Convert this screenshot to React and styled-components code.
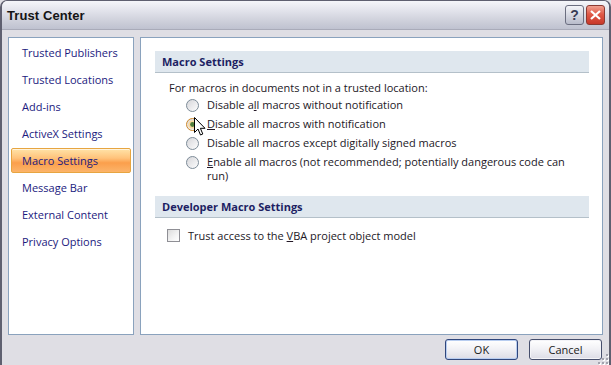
import React from "react";
import styled, { createGlobalStyle } from "styled-components";

const GlobalStyle = createGlobalStyle`
  html, body {
    margin: 0;
    padding: 0;
    background: #dfdee4;
  }
  body {
    font-family: "Open Sans", "Noto Sans", sans-serif;
    font-size: 11px;
  }
`;

const Window = styled.div`
  width: 611px;
  height: 365px;
  box-sizing: border-box;
  display: flex;
  flex-direction: column;
  background: #dfdee4;
  border-left: 2px solid #5f6070;
  border-right: 2px solid #5f6070;
  border-top: 1px solid #5f6070;
  border-radius: 7px 7px 0 0;
  overflow: hidden;
  position: relative;
`;

const TitleBar = styled.div`
  height: 28px;
  flex-shrink: 0;
  display: flex;
  align-items: center;
  padding: 0 4px 0 5px;
  background: linear-gradient(#f5f6fa 0%, #e2e3eb 35%, #ccced9 75%, #bfc2d0 100%);
  border-bottom: 1px solid #a9abb9;
`;

const Title = styled.div`
  flex: 1;
  font-family: "Liberation Sans", Arial, sans-serif;
  font-weight: bold;
  font-size: 13px;
  color: #141414;
  letter-spacing: 0.1px;
`;

const CaptionButton = styled.div`
  width: 19px;
  height: 20px;
  box-sizing: border-box;
  margin-left: 2px;
  border: 1px solid ${(p) => (p.$close ? "#8b3a32" : "#6b6e80")};
  border-radius: 3px;
  display: flex;
  align-items: center;
  justify-content: center;
  background: ${(p) =>
    p.$close
      ? "linear-gradient(#f0a090 0%, #e05a48 45%, #c8382a 100%)"
      : "linear-gradient(#f4f5f9 0%, #d6d8e2 50%, #b9bccb 100%)"};
  color: ${(p) => (p.$close ? "#fff" : "#3a3d55")};
  font-family: "Liberation Sans", Arial, sans-serif;
  font-weight: bold;
  font-size: 14px;
`;

const Body = styled.div`
  flex: 1;
  display: flex;
  flex-direction: column;
  padding: 7px 6px 0 6px;
  min-height: 0;
`;

const Panels = styled.div`
  display: flex;
  gap: 6px;
  height: 298px;
`;

const Nav = styled.div`
  width: 126px;
  box-sizing: border-box;
  background: #fff;
  border: 1px solid #8aa2bd;
  padding-top: 1px;
  display: flex;
  flex-direction: column;
`;

const NavItem = styled.div`
  height: 25px;
  margin: 1px 2px;
  box-sizing: border-box;
  display: flex;
  align-items: center;
  padding-left: 10px;
  padding-bottom: 1px;
  color: #1b1a7e;
  white-space: nowrap;
  border: 1px solid ${(p) => (p.$active ? "#e7a540" : "transparent")};
  border-radius: 2px;
  background: ${(p) =>
    p.$active
      ? "linear-gradient(#ffe3a8 0%, #ffc27a 40%, #fb9f4c 60%, #fcb46a 100%)"
      : "transparent"};
  box-shadow: ${(p) =>
    p.$active ? "inset 0 1px 0 rgba(255,255,255,0.6)" : "none"};
`;

const Content = styled.div`
  flex: 1;
  box-sizing: border-box;
  background: #fff;
  border: 1px solid #8aa2bd;
  padding: 13px 13px 0 14px;
  position: relative;
`;

const SectionHeader = styled.div`
  height: 21px;
  box-sizing: content-box;
  background: #dfe7ee;
  border-bottom: 1px solid #b4c0c9;
  display: flex;
  align-items: center;
  padding-left: 7px;
  font-weight: bold;
  color: #1d1f63;
`;

const Section = styled.div`
  padding: ${(p) => (p.$compact ? "5px" : "6px")} 20px 0 14px;
  margin-bottom: 10px;
  color: #231826;
`;

const Lead = styled.div`
  height: 17px;
  display: flex;
  align-items: center;
`;

const OptionRow = styled.div`
  display: flex;
  align-items: flex-start;
  padding-left: 17px;
  min-height: 19px;
  line-height: 14px;
`;

const OptionMark = styled.div`
  width: 13px;
  height: 13px;
  flex-shrink: 0;
  margin-top: 3px;
  margin-right: 8px;
`;

const OptionText = styled.div`
  padding: 2px 0 3px;
  &::first-letter {
    text-decoration: ${(p) => (p.$keyFirst ? "underline" : "none")};
  }
`;

const CheckRow = styled.div`
  display: flex;
  align-items: center;
  height: 19px;
  padding-top: 3px;
  margin-left: -2px;
`;

const CheckBox = styled.div`
  width: 13px;
  height: 13px;
  box-sizing: border-box;
  border: 1px solid #8f8f95;
  background: linear-gradient(135deg, #dcdcdc 0%, #f4f4f4 60%, #ffffff 100%);
  margin-right: 8px;
`;

const Footer = styled.div`
  flex: 1;
  display: flex;
  justify-content: flex-end;
  align-items: flex-start;
  gap: 11px;
  padding-top: 4px;
  padding-right: 1px;
`;

const Button = styled.div`
  width: 73px;
  height: 21px;
  box-sizing: border-box;
  border: 1px solid ${(p) => (p.$default ? "#30467c" : "#464e6c")};
  border-radius: 3px;
  background: linear-gradient(#ffffff 0%, #f2f2f6 45%, #dcdce6 100%);
  box-shadow: ${(p) =>
    p.$default ? "inset 0 0 0 1px #b8cdf0" : "inset 0 0 0 1px #f4f4f8"};
  display: flex;
  align-items: center;
  justify-content: center;
  color: #1a1a1a;
`;

const U = styled.span`
  text-decoration: underline;
`;

const Cursor = styled.svg`
  position: absolute;
  left: 53px;
  top: 79px;
`;

const Grip = styled.svg`
  position: absolute;
  right: 0;
  bottom: 0;
`;

const Radio = ({ checked }) => (
  <svg width="13" height="13" viewBox="0 0 13 13">
    <defs>
      <linearGradient id={checked ? "rg1" : "rg0"} x1="0" y1="0" x2="1" y2="1">
        <stop offset="0" stopColor="#d4d4d8" />
        <stop offset="1" stopColor="#ffffff" />
      </linearGradient>
    </defs>
    <circle
      cx="6.5"
      cy="6.5"
      r="6"
      fill={`url(#${checked ? "rg1" : "rg0"})`}
      stroke={checked ? "#d08a2a" : "#7d8c98"}
      strokeWidth="1"
    />
    {checked && (
      <>
        <circle cx="6.5" cy="6.5" r="4.3" fill="#fbd9a0" />
        <circle cx="6.5" cy="6.5" r="2.4" fill="#4f7d3a" />
      </>
    )}
  </svg>
);

const navItems = [
  "Trusted Publishers",
  "Trusted Locations",
  "Add-ins",
  "ActiveX Settings",
  "Macro Settings",
  "Message Bar",
  "External Content",
  "Privacy Options",
];

export default function App() {
  return (
    <>
      <GlobalStyle />
      <Window>
        <TitleBar>
          <Title>Trust Center</Title>
          <CaptionButton>?</CaptionButton>
          <CaptionButton $close>
            <svg width="11" height="10" viewBox="0 0 11 10">
              <path d="M1 1 L10 9 M10 1 L1 9" stroke="#fff" strokeWidth="2.2" />
            </svg>
          </CaptionButton>
        </TitleBar>
        <Body>
          <Panels>
            <Nav>
              {navItems.map((n) => (
                <NavItem key={n} $active={n === "Macro Settings"}>
                  {n}
                </NavItem>
              ))}
            </Nav>
            <Content>
              <SectionHeader>Macro Settings</SectionHeader>
              <Section>
                <Lead>For macros in documents not in a trusted location:</Lead>
                <OptionRow>
                  <OptionMark>
                    <Radio />
                  </OptionMark>
                  <OptionText>
                    Disable a<U>l</U>l macros without notification
                  </OptionText>
                </OptionRow>
                <OptionRow>
                  <OptionMark>
                    <Radio checked />
                  </OptionMark>
                  <OptionText $keyFirst>
                    Disable all macros with notification
                  </OptionText>
                </OptionRow>
                <OptionRow>
                  <OptionMark>
                    <Radio />
                  </OptionMark>
                  <OptionText>
                    Disable all macros except di<U>g</U>itally signed macros
                  </OptionText>
                </OptionRow>
                <OptionRow>
                  <OptionMark>
                    <Radio />
                  </OptionMark>
                  <OptionText $keyFirst>
                    Enable all macros (not recommended; potentially dangerous
                    code can run)
                  </OptionText>
                </OptionRow>
              </Section>
              <SectionHeader>Developer Macro Settings</SectionHeader>
              <Section $compact>
                <CheckRow>
                  <CheckBox />
                  <span>
                    Trust access to the <U>V</U>BA project object model
                  </span>
                </CheckRow>
              </Section>
              <Cursor width="12" height="19" viewBox="0 0 12 19">
                <path
                  d="M0.5 0.5 L0.5 15.5 L4 12 L6.5 18 L8.8 17 L6.4 11.3 L11 11.3 Z"
                  fill="#fff"
                  stroke="#000"
                  strokeWidth="1"
                  strokeLinejoin="miter"
                />
              </Cursor>
            </Content>
          </Panels>
          <Footer>
            <Button $default>OK</Button>
            <Button>Cancel</Button>
          </Footer>
        </Body>
        <Grip width="12" height="12" viewBox="0 0 12 12">
          {[
            [9, 1],
            [9, 5],
            [5, 5],
            [9, 9],
            [5, 9],
            [1, 9],
          ].map(([x, y]) => (
            <g key={`${x}-${y}`}>
              <rect x={x + 1} y={y + 1} width="2" height="2" fill="#fff" />
              <rect x={x} y={y} width="2" height="2" fill="#a3a3ae" />
            </g>
          ))}
        </Grip>
      </Window>
    </>
  );
}
